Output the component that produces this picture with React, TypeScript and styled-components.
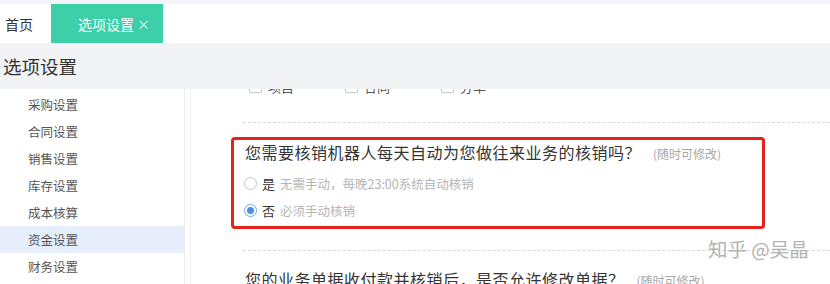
import React from "react";
import styled, { createGlobalStyle } from "styled-components";

const Global = createGlobalStyle`
  html, body { margin: 0; padding: 0; background: #fff; }
  body { font-family: "Noto Sans CJK SC", "Noto Sans", sans-serif; }
`;

const Page = styled.div`
  position: relative;
  width: 830px;
  height: 284px;
  overflow: hidden;
  display: flex;
  flex-direction: column;
  background: #fff;
`;

const TopStrip = styled.div`
  height: 4px;
  background: #f4f5f8;
  flex: none;
`;

const TabBar = styled.div`
  height: 39px;
  flex: none;
  display: flex;
  align-items: stretch;
  background: #fff;
`;

const Tab = styled.div<{ $active?: boolean }>`
  display: flex;
  align-items: center;
  font-size: 14px;
  color: ${(p) => (p.$active ? "#fff" : "#333")};
  background: ${(p) => (p.$active ? "#3ccfa8" : "transparent")};
  width: ${(p) => (p.$active ? "112px" : "51px")};
  padding-left: ${(p) => (p.$active ? "27px" : "5px")};
  box-sizing: border-box;
  gap: 3px;
`;

const Close = styled.span`
  font-size: 13px;
  opacity: 0.9;
`;

const PageHeader = styled.div`
  height: 46px;
  flex: none;
  display: flex;
  align-items: center;
  padding-left: 3px;
  background: #f2f3f5;
  font-size: 18.5px;
  color: #333;
`;

const Body = styled.div`
  flex: 1;
  display: flex;
  min-height: 0;
`;

const Sidebar = styled.div`
  width: 185px;
  flex: none;
  padding-top: 2px;
  border-right: 1px solid #ececec;
  box-sizing: border-box;
`;

const NavItem = styled.div<{ $active?: boolean }>`
  height: 27px;
  display: flex;
  align-items: center;
  padding-left: 28px;
  font-size: 12.5px;
  color: #555;
  background: ${(p) => (p.$active ? "#e6eefb" : "transparent")};
`;

const Content = styled.div`
  flex: 1;
  margin-left: 5px;
  border-left: 1px solid #f0f0f0;
  padding-left: 52px;
  overflow: hidden;
  display: flex;
  flex-direction: column;
`;

const CheckRow = styled.div`
  flex: none;
  margin-top: -15px;
  height: 24px;
  display: flex;
  align-items: center;
  padding-left: 6px;
`;

const CheckItem = styled.label`
  width: 96px;
  display: flex;
  align-items: center;
  gap: 6px;
  font-size: 13px;
  color: #555;
`;

const Box = styled.span`
  width: 13px;
  height: 13px;
  box-sizing: border-box;
  border: 1px solid #c8c8c8;
  border-radius: 2px;
  background: #fff;
`;

const Divider = styled.div<{ $top: number }>`
  margin-top: ${(p) => p.$top}px;
  border-top: 1px dashed #d9d9d9;
  flex: none;
`;

const Section = styled.div<{ $marked?: boolean }>`
  margin-top: ${(p) => (p.$marked ? "14px" : "17px")};
  margin-left: ${(p) => (p.$marked ? "-12px" : "2px")};
  width: ${(p) => (p.$marked ? "534px" : "auto")};
  box-sizing: border-box;
  border: ${(p) => (p.$marked ? "3px solid #e0241b" : "none")};
  border-radius: 4px;
  padding: ${(p) => (p.$marked ? "1px 0 2px 11px" : "0")};
  flex: none;
`;

const Question = styled.div`
  line-height: 22px;
  font-size: 16px;
  letter-spacing: 0.5px;
  color: #333;
  white-space: nowrap;
`;

const Hint = styled.span`
  font-size: 12px;
  letter-spacing: 0;
  color: #a8a8a8;
  margin-left: 12px;
`;

const Options = styled.div`
  margin-top: 5px;
`;

const RadioRow = styled.label`
  height: 27px;
  display: flex;
  align-items: center;
  font-size: 13px;
  color: #333;
`;

const Radio = styled.span<{ $checked?: boolean }>`
  width: 13px;
  height: 13px;
  border-radius: 50%;
  border: 1px solid ${(p) => (p.$checked ? "#6aa6e8" : "#c4c4c4")};
  box-sizing: border-box;
  display: flex;
  align-items: center;
  justify-content: center;
  margin-right: 5px;
  margin-left: -1px;
  background: #fff;
  &::after {
    content: "";
    width: 7px;
    height: 7px;
    border-radius: 50%;
    background: ${(p) => (p.$checked ? "#4a8fe0" : "transparent")};
  }
`;

const Desc = styled.span`
  font-size: 12.5px;
  color: #b5b5b5;
  margin-left: 5px;
`;

const Watermark = styled.div`
  position: absolute;
  left: 708px;
  top: 234px;
  font-size: 19.5px;
  color: #b4b4b4;
  white-space: nowrap;
`;

const navItems = ["采购设置", "合同设置", "销售设置", "库存设置", "成本核算", "资金设置", "财务设置"];

export default function App() {
  return (
    <>
      <Global />
      <Page>
        <TopStrip />
        <TabBar>
          <Tab>首页</Tab>
          <Tab $active>
            选项设置 <Close>×</Close>
          </Tab>
        </TabBar>
        <PageHeader>选项设置</PageHeader>
        <Body>
          <Sidebar>
            {navItems.map((n) => (
              <NavItem key={n} $active={n === "资金设置"}>
                {n}
              </NavItem>
            ))}
          </Sidebar>
          <Content>
            <CheckRow>
              <CheckItem>
                <Box />
                项目
              </CheckItem>
              <CheckItem>
                <Box />
                合同
              </CheckItem>
              <CheckItem>
                <Box />
                分单
              </CheckItem>
            </CheckRow>
            <Divider $top={24} />
            <Section $marked>
              <Question>
                您需要核销机器人每天自动为您做往来业务的核销吗？<Hint>(随时可修改)</Hint>
              </Question>
              <Options>
                <RadioRow>
                  <Radio />
                  是<Desc>无需手动，每晚23:00系统自动核销</Desc>
                </RadioRow>
                <RadioRow>
                  <Radio $checked />
                  否<Desc>必须手动核销</Desc>
                </RadioRow>
              </Options>
            </Section>
            <Divider $top={21} />
            <Section>
              <Question>
                您的业务单据收付款并核销后，是否允许修改单据？<Hint>(随时可修改)</Hint>
              </Question>
            </Section>
          </Content>
        </Body>
        <Watermark>知乎 @吴晶</Watermark>
      </Page>
    </>
  );
}
